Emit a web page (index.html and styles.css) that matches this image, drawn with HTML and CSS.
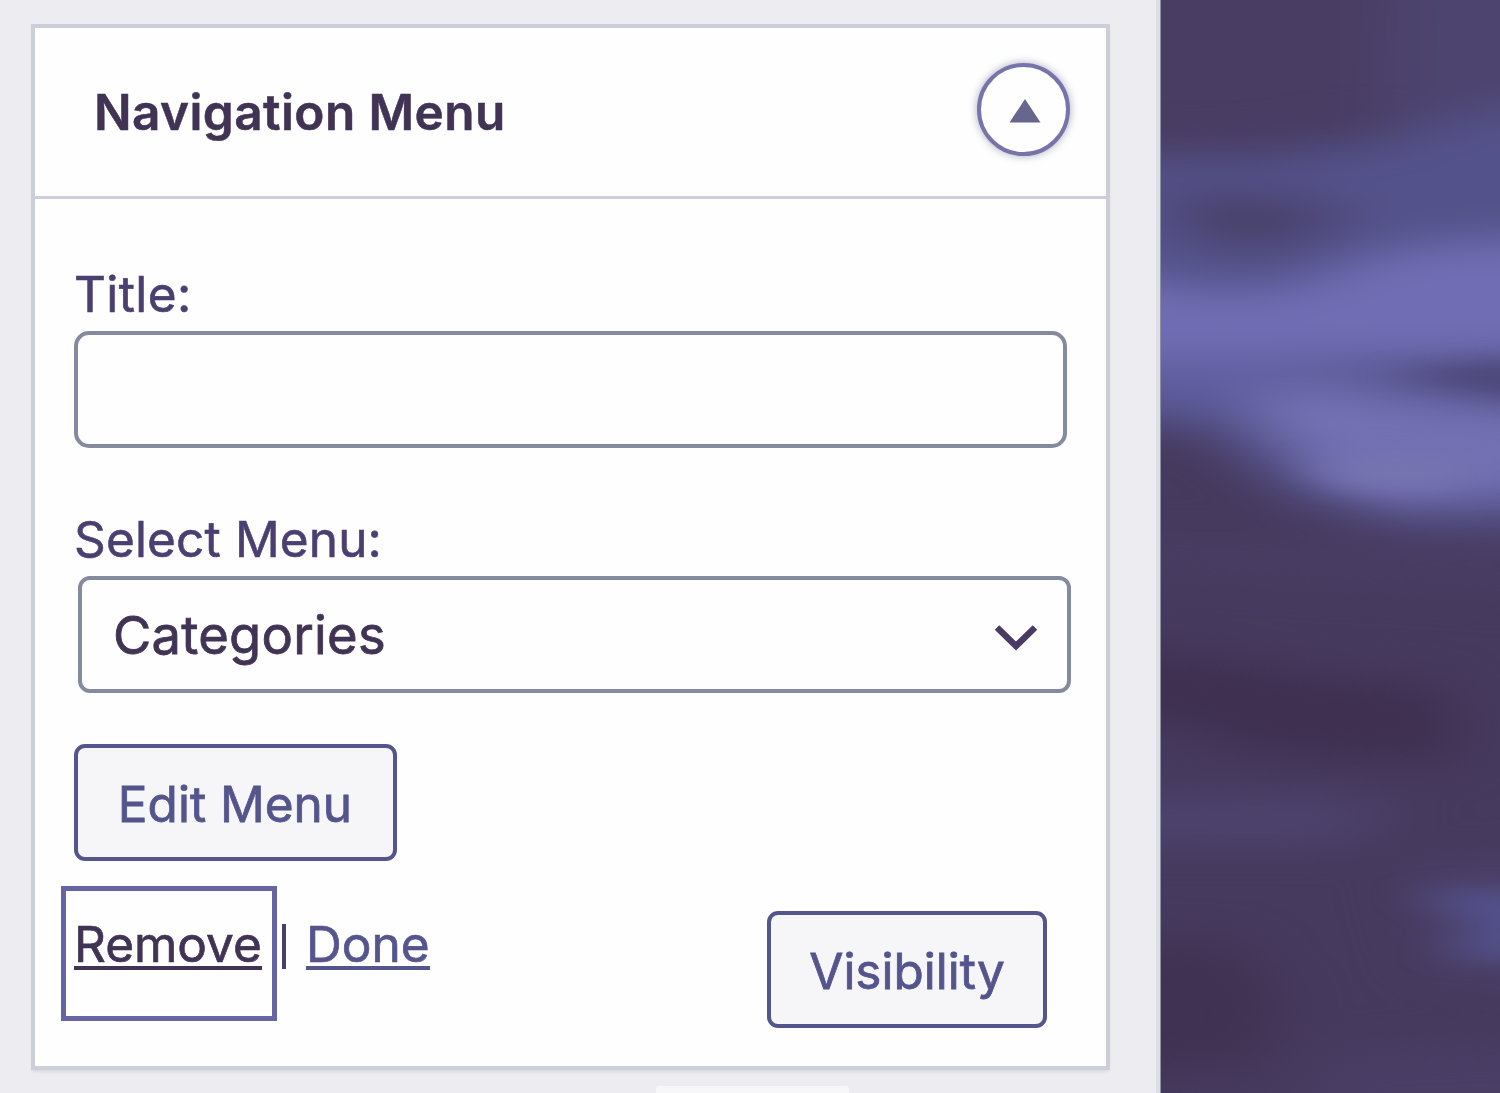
FILE: index.html
```html
<!DOCTYPE html>
<html lang="en">
<head>
<meta charset="utf-8">
<title>Navigation Menu</title>
<link rel="stylesheet" href="styles.css">
</head>
<body>
<main class="screen">
  <aside class="sidebar">
    <section class="widget">
      <header class="widget-head">
        <h2 class="heading">Navigation Menu</h2>
        <button class="toggle" aria-label="Collapse">
          <svg width="32" height="24" viewBox="0 0 32 24"><path d="M16 0 31.5 23.5H.5Z" fill="#66668f"/></svg>
        </button>
      </header>
      <div class="widget-body">
        <label class="label label-title" for="title">Title:</label>
        <input class="input" id="title" type="text">
        <div class="label label-select">Select Menu:</div>
        <div class="select">
          <span>Categories</span>
          <svg class="chevron" width="44" height="26" viewBox="0 0 44 26"><path d="M3 2.5 22 21 41 2.5" fill="none" stroke="#4a3b64" stroke-width="6.5"/></svg>
        </div>
        <button class="button edit">Edit Menu</button>
        <div class="actions">
          <div class="remove-box"><a class="link remove">Remove</a></div>
          <i class="divider"></i>
          <a class="link done">Done</a>
          <button class="button visibility">Visibility</button>
        </div>
      </div>
    </section>
    <div class="next-item"></div>
  </aside>
  <svg class="preview" width="339" height="1093" viewBox="0 0 339 1093">
    <defs>
      <filter id="soft" x="-30%" y="-30%" width="160%" height="160%" color-interpolation-filters="sRGB"><feGaussianBlur stdDeviation="32 18"/></filter>
      <filter id="fine" x="-30%" y="-30%" width="160%" height="160%" color-interpolation-filters="sRGB"><feGaussianBlur stdDeviation="26 10"/></filter>
    </defs>
    <rect width="339" height="1093" fill="#463a5e"/>
    <g filter="url(#soft)">
      <path d="M-100-80H440V80L230 115 100 140-100 142Z" fill="#493d63"/>
      <path d="M230-80H440V110L220 130Z" fill="#4d446f"/>
      <path d="M-100 540H440V600L-100 570Z" fill="#493d63"/>
      <path d="M-100 155 100 155 220 138 440 85V530L240 524 130 498 50 435-100 412Z" fill="#54528a"/>
      <path d="M0 200Q90 185 200 215Q140 240 85 250Q30 240 0 200Z" fill="#484069"/>
      <path d="M-100 266 60 292 140 284 200 258 270 243 440 234V354L230 360-100 370Z" fill="#716db4"/>
      <path d="M-100 356H150L110 408-100 402Z" fill="#605ea0"/>
      <path d="M70 400 170 380 240 395 440 415V492L230 506 155 475Z" fill="#7370b3"/>
      <path d="M-100 640 70 660 200 680 270 680 300 720 290 765 100 755 0 720-100 730Z" fill="#3f3051"/>
      <path d="M-80 800 120 795 250 808 180 845-80 845Z" fill="#4d436d"/>
      <path d="M-100 940 70 940 120 1000 100 1060-100 1085Z" fill="#403252"/>
      <path d="M240 870 440 850V990L270 975Z" fill="#4b4068"/>
      <path d="M170 1050 440 1040V1150H120Z" fill="#4a3e65"/>
    </g>
    <g filter="url(#fine)">
      <path d="M240 374Q310 362 440 359V404Q310 393 240 374Z" fill="#4d4778"/>
      <path d="M260 893Q320 884 440 895V930L440 965 290 958 310 925Z" fill="#525089"/>
      <ellipse cx="235" cy="470" rx="75" ry="20" fill="#7673b0"/>
    </g>
  </svg>
</main>
</body>
</html>
```
FILE: styles.css
```css
* { box-sizing: border-box; }
body { margin: 0; font-family: Inter, "Liberation Sans", sans-serif; background: #edecf1; }
.screen { display: flex; width: 1500px; height: 1093px; overflow: hidden; }
.sidebar {
  width: 1161px; height: 1093px; padding: 24px 0 0 31px; overflow: hidden;
  background: #edecf1; border-right: 1px solid #8b92a0; box-shadow: inset -4px 0 #dddfe6;
}
.widget {
  width: 1079px; height: 1046px; background: #fefefe;
  border: 4px solid #cccfda; box-shadow: 0 3px 3px -1px #d9dae2;
}
.widget-head {
  height: 171px; padding: 0 36px 0 59px; border-bottom: 3px solid #cccfda;
  display: flex; justify-content: space-between; align-items: center;
}
.heading {
  margin: -1px 0 0; font-size: 49.5px; line-height: 60px; font-weight: 600; letter-spacing: .42px;
  color: #413354; white-space: nowrap; -webkit-text-stroke: .5px;
}
.toggle {
  width: 93px; height: 93px; margin-top: -5px; padding: 2px 0 0 3px; border: 4px solid #7674a8; border-radius: 50%;
  background: #fefefe; box-shadow: 0 0 8px #a9adbe; display: grid; place-items: center;
}
.widget-body { padding: 65px 0 0 39px; }
.label {
  display: block; height: 60px; line-height: 60px; font-size: 49.5px; color: #4a3f70;
  white-space: nowrap; -webkit-text-stroke: .6px;
}
.label-title { letter-spacing: .4px; }
.input {
  display: block; width: 993px; height: 117px; margin: 7px 0 0; border: 4px solid #858b9f;
  border-radius: 15px; background: #fefefe; font: 49.5px Inter, sans-serif; outline: 0;
}
.label-select { margin-top: 61px; letter-spacing: .15px; }
.select {
  width: 993px; height: 117px; margin: 7px 0 0 4px; padding: 0 29px 0 31px; border: 4px solid #858b9f;
  border-radius: 12px; display: flex; align-items: center; justify-content: space-between;
  font-size: 52.5px; line-height: 64px; letter-spacing: .25px; color: #413354; -webkit-text-stroke: .8px;
}
.chevron { margin-top: 7px; }
.button {
  display: flex; justify-content: center; align-items: center; padding: 0; height: 117px;
  border: 4px solid #55558d; border-radius: 11px; background: #f6f6f9; color: #55558d;
  font: 49.5px/60px Inter, sans-serif; white-space: nowrap; -webkit-text-stroke: .8px;
}
.edit { width: 323px; margin-top: 51px; padding: 3px 1px 0 0; }
.actions {
  display: flex; align-items: flex-start; margin: 25px 0 0 -13px; font-size: 49.5px; line-height: 60px;
  -webkit-text-stroke: .7px;
}
.remove-box { width: 216px; height: 135px; padding: 23px 0 0 8px; border: 5px solid #6764a6; }
.link { display: block; position: relative; height: 60px; white-space: nowrap; }
.link::after { content: ""; position: absolute; left: 0; bottom: 4px; height: 4px; background: currentColor; }
.remove { color: #413354; }
.remove::after { width: 188px; }
.done { margin: 28px 0 0 20px; width: 124px; color: #55558d; }
.done::after { width: 124px; }
.divider { width: 4px; height: 45px; margin: 38px 0 0 5px; background: #4a3f66; }
.visibility { width: 280px; margin: 25px 0 0 337px; padding-top: 3px; }
.next-item { width: 193px; height: 20px; margin: 16px 0 0 625px; border-radius: 3px; background: #f7f7f9; }
.preview { display: block; flex: none; }
```
